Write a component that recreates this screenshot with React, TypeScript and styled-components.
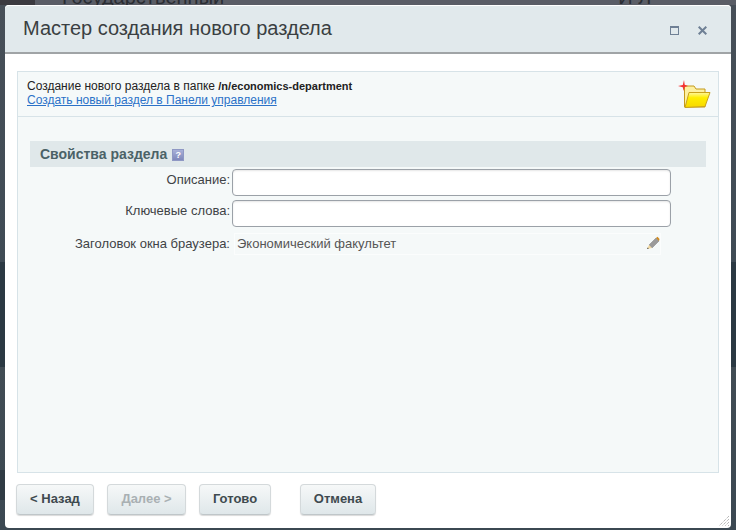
import React from "react";
import styled, { createGlobalStyle } from "styled-components";

const Global = createGlobalStyle`
  html, body { margin: 0; padding: 0; width: 736px; height: 530px; overflow: hidden; background: #3d4a54; }
  * { box-sizing: border-box; }
`;

const Backdrop = styled.div`
  position: relative;
  width: 736px;
  height: 530px;
  background: linear-gradient(#5a5d66 0, #5a5d66 5px, #474f58 5px, #3f4b55 262px, #2b3943 262px, #2b3943 367px, #414c54 367px, #3b4852 530px);
  overflow: hidden;
  font-family: "Liberation Sans", Arial, sans-serif;
`;

const BehindPatch = styled.div`
  position: absolute;
  left: 0;
  top: 0;
  width: 35px;
  height: 5px;
  background: #3b3a40;
`;

const BehindBlob = styled.div`
  position: absolute;
  left: 0;
  top: 470px;
  width: 5px;
  height: 30px;
  background: #2f3b44;
`;

const BehindText = styled.div<{ $left: number }>`
  position: absolute;
  left: ${(p) => p.$left}px;
  top: -15px;
  font-size: 20px;
  line-height: 24px;
  color: #2a2d33;
  white-space: nowrap;
`;

const Dialog = styled.div`
  position: absolute;
  left: 5px;
  top: 5px;
  width: 726px;
  height: 523px;
  background: #fff;
  border-radius: 4px;
  display: flex;
  flex-direction: column;
`;

const Header = styled.div`
  height: 49px;
  flex: none;
  background: #e1e9ec;
  border-top: 1px solid #fff;
  border-bottom: 2px solid #a0a4a6;
  border-radius: 4px 4px 0 0;
  display: flex;
  align-items: center;
  padding: 0 24px 0 18px;
`;

const Title = styled.h1`
  flex: 1;
  margin: 0 0 2px;
  font-size: 20px;
  font-weight: 400;
  color: #3a3f42;
`;

const HeaderIcons = styled.div`
  display: flex;
  align-items: center;
  gap: 19px;
  margin-top: 3px;
`;

const Body = styled.div`
  flex: none;
  margin: 17px 12px 0;
  height: 402px;
  background: #f5f9f9;
  border: 1px solid #d7e3e8;
  display: flex;
  flex-direction: column;
`;

const Notice = styled.div`
  height: 45px;
  flex: none;
  border-bottom: 1px solid #d7e3e8;
  padding: 7px 9px 0;
  position: relative;
  font-size: 12px;
  line-height: 14px;
  color: #222;
`;

const Path = styled.b`
  font-size: 11px;
`;

const Link = styled.a`
  color: #2b72c8;
  text-decoration: underline;
  display: block;
`;

const FolderIcon = styled.svg`
  position: absolute;
  right: 6px;
  top: 7px;
`;

const Section = styled.div`
  margin: 24px 12px 0;
  display: flex;
  flex-direction: column;
`;

const SectionHead = styled.div`
  height: 26px;
  background: #e0e8ea;
  display: flex;
  align-items: center;
  padding-left: 10px;
  gap: 5px;
  font-size: 14px;
  font-weight: 700;
  color: #4b6267;
`;

const Help = styled.span`
  width: 12px;
  height: 12px;
  margin-top: 2px;
  background: linear-gradient(#a8b0d8, #7f88bb);
  border: 1px solid #8f98c4;
  color: #fff;
  font-size: 9px;
  line-height: 10px;
  text-align: center;
  font-weight: 700;
`;

const Row = styled.div<{ $mt: number }>`
  display: grid;
  grid-template-columns: 200px 439px;
  column-gap: 2px;
  align-items: center;
  margin-top: ${(p) => p.$mt}px;
`;

const Label = styled.label<{ $pb: number }>`
  text-align: right;
  font-size: 13px;
  line-height: 15px;
  padding-bottom: ${(p) => p.$pb}px;
  color: #3f4346;
`;

const Input = styled.input`
  height: 27px;
  width: 439px;
  padding: 0 6px;
  background: #fff;
  border: 1px solid #9ba1a8;
  border-radius: 4px;
  box-shadow: inset 0 1px 2px rgba(0, 0, 0, 0.1);
  outline: none;
`;

const ReadOnly = styled.div`
  margin-left: 2px;
  height: 22px;
  width: 427px;
  border: 1px solid #fbfdfd;
  display: flex;
  align-items: center;
  justify-content: space-between;
  padding: 0 0 2px 2px;
  font-size: 13px;
  color: #555;
`;

const Footer = styled.div`
  display: flex;
  padding: 11px 0 0 11px;
`;

const Button = styled.button<{ $w: number; $ml: number; $off?: boolean }>`
  width: ${(p) => p.$w}px;
  height: 31px;
  margin-left: ${(p) => p.$ml}px;
  padding: 0 0 2px;
  border: 1px solid #d4d9db;
  border-bottom-color: #bfc6c9;
  border-radius: 4px;
  background: linear-gradient(#f6f8f8, #dfe7ea);
  box-shadow: 0 1px 1px rgba(0, 0, 0, 0.15);
  font-family: inherit;
  font-size: 13px;
  font-weight: 700;
  color: ${(p) => (p.$off ? "#a9b0b3" : "#3f4a4f")};
`;

const Grip = styled.svg`
  position: absolute;
  right: 1px;
  bottom: 1px;
`;

export default function App() {
  return (
    <Backdrop>
      <Global />
      <BehindPatch />
      <BehindBlob />
      <BehindText $left={62}>Государственный</BehindText>
      <BehindText $left={606}>- И Л</BehindText>
      <Dialog>
        <Header>
          <Title>Мастер создания нового раздела</Title>
          <HeaderIcons>
            <svg width="9" height="9" viewBox="0 0 9 9">
              <rect x="0.5" y="0.5" width="8" height="8" fill="none" stroke="#6f8095" />
              <rect x="0" y="0" width="9" height="2" fill="#6f8095" />
            </svg>
            <svg width="9" height="9" viewBox="0 0 9 9">
              <path d="M0.7 0.7 L8.3 8.3 M8.3 0.7 L0.7 8.3" stroke="#6f8095" strokeWidth="2" fill="none" />
            </svg>
          </HeaderIcons>
        </Header>
        <Body>
          <Notice>
            Создание нового раздела в папке <Path>/n/economics-department</Path>
            <Link href="#">Создать новый раздел в Панели управления</Link>
            <FolderIcon width="34" height="30" viewBox="0 0 34 30">
              <defs>
                <linearGradient id="front" x1="0" y1="0" x2="0" y2="1">
                  <stop offset="0" stopColor="#fff7a0" />
                  <stop offset="0.35" stopColor="#ffee00" />
                  <stop offset="1" stopColor="#f7d800" />
                </linearGradient>
              </defs>
              <path d="M6.5 7 L6.5 28 L27 28 L27 10 L18 10 L16 7 Z" fill="#fdf0a0" stroke="#c49a1c" />
              <path d="M11 13.5 L32 13.5 L27 27.5 L7 28.5 Z" fill="url(#front)" stroke="#c9a21c" />
              <path d="M6 1 L6.7 5.7 L10 7 L6.7 8 L5.6 12 L4.8 8.2 L0 7 L4.8 6 Z" fill="#f43030" />
            </FolderIcon>
          </Notice>
          <Section>
            <SectionHead>
              Свойства раздела <Help>?</Help>
            </SectionHead>
            <Row $mt={2}>
              <Label $pb={6}>Описание:</Label>
              <Input />
            </Row>
            <Row $mt={4}>
              <Label $pb={6}>Ключевые слова:</Label>
              <Input />
            </Row>
            <Row $mt={6}>
              <Label $pb={2}>Заголовок окна браузера:</Label>
              <ReadOnly>
                Экономический факультет
                <svg width="14" height="14" viewBox="0 0 14 14">
                  <path d="M3 9 L10 2 L13 5 L6 12 Z" fill="#9a9a9a" stroke="#7d7d7d" strokeWidth="0.5" />
                  <path d="M10 2 L11.5 0.7 L13.5 3 L13 5 Z" fill="#d08a1e" />
                  <path d="M3 9 L1 13 L6 12 Z" fill="#f3d9a0" />
                  <path d="M1.8 11.4 L1 13 L2.8 12.6 Z" fill="#333" />
                </svg>
              </ReadOnly>
            </Row>
          </Section>
        </Body>
        <Footer>
          <Button $w={78} $ml={0}>&lt; Назад</Button>
          <Button $w={79} $ml={13} $off>Далее &gt;</Button>
          <Button $w={72} $ml={13}>Готово</Button>
          <Button $w={76} $ml={29}>Отмена</Button>
        </Footer>
        <Grip width="12" height="12" viewBox="0 0 12 12">
          <path d="M11 1 L1 11 M11 4 L4 11 M11 7 L7 11 M11 10 L10 11" stroke="#999" strokeDasharray="1 1" fill="none" />
        </Grip>
      </Dialog>
    </Backdrop>
  );
}
